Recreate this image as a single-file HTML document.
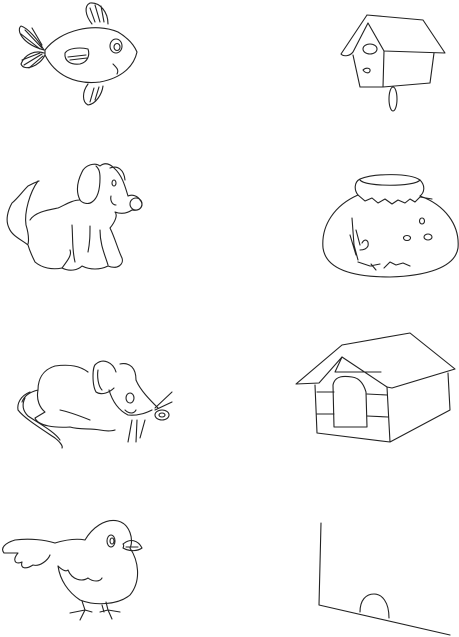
<!DOCTYPE html>
<html><head><meta charset="utf-8"><style>
html,body{margin:0;padding:0;background:#fff;width:459px;height:637px;overflow:hidden}
svg{display:block}
</style></head><body>
<svg width="459" height="637" viewBox="0 0 459 637" fill="none" stroke="#222" stroke-width="1.1" stroke-linecap="round" stroke-linejoin="round">
<!-- Fish -->
<path d="M45 50 C60 30 95 22 118 32 C128 38 134 45 137 52 C134 66 122 78 100 82 C75 85 55 75 45 55 Z"/>
<path d="M44 50 C38 40 28 28 21 26 C16 30 22 44 44 50 M44 53 C35 50 25 54 21 64 C24 72 40 66 45 55"/>
<path d="M25 30 L42 48 M21 34 L40 49 M32 28 L42 45 M24 65 L42 54 M22 60 L40 53 M29 68 L43 56"/>
<path d="M92 24 C85 15 84 6 90 3 C100 2 108 12 108 24 M95 22 L90 8 M100 22 L95 5 M104 22 L101 6"/>
<path d="M88 84 C82 92 82 102 88 105 C96 104 102 94 103 86 M90 102 L94 88 M95 100 L99 87"/>
<path d="M65 53 C68 48 80 47 88 49 C90 55 88 62 80 64 C72 65 64 62 65 53 M68 57 L86 55 M70 60 L87 58"/>
<ellipse cx="116" cy="46" rx="6" ry="7"/><ellipse cx="117" cy="47" rx="3" ry="3.5"/>
<path d="M113 64 C117 68 119 70 117 74"/>
<!-- Dog -->
<path d="M39 181 L34 183 L28 186 C22 192 18 198 12 203 C8 210 5 220 9 228 C12 236 22 240 28 245 C30 252 33 258 35 262 C42 268 52 270 62 268 C70 272 78 270 82 266 C90 270 100 270 108 266 C118 270 124 264 122 258 C118 250 115 238 110 228 C115 222 118 215 115 212 C120 214 126 214 132 210 C140 212 145 205 140 200 C138 196 132 194 128 196 C125 186 122 175 114 168 C110 164 105 162 100 166 C95 162 85 165 82 172 C78 180 75 190 80 200 C72 200 65 205 58 208 C48 210 35 212 30 220"/>
<path d="M38 181 C30 192 24 212 26 225 C30 238 28 244 28 244"/>
<path d="M80 200 C82 203 88 205 92 202 C98 198 100 188 100 178 C100 170 98 168 96 166"/>
<path d="M110 168 C118 165 124 170 125 180 M111 196 C110 200 112 205 116 205"/>
<ellipse cx="114" cy="183" rx="2" ry="3"/>
<circle cx="136" cy="204" r="6"/>
<path d="M72 225 C73 240 72 250 75 262 M90 226 C90 235 90 242 88 252 M62 268 C68 260 72 255 70 250 M100 230 C100 245 105 255 108 265"/>
<!-- Birdhouse -->
<path d="M367 15 L341 54 C344 57 350 56 353 52 L368 23 L384 51 L445 53 L423 20 L367 15"/>
<path d="M353 55 L360 87 L383 87 L384 51 M383 87 L430 83 L434 53"/>
<ellipse cx="370" cy="49" rx="7" ry="5"/>
<path d="M363 70 C366 67 371 68 370 71 C369 74 365 73 363 70"/>
<ellipse cx="393" cy="99" rx="4" ry="12"/>
<!-- Fishbowl -->
<path d="M358 195 C354 190 354 182 360 179 C375 173 410 173 420 180 C426 186 424 193 420 196 C445 205 460 225 458 248 C455 268 425 276 390 277 C355 277 326 270 323 248 C321 225 335 205 358 195 Z"/>
<path d="M360 180 C365 187 415 187 420 180"/>
<path d="M358 195 L365 201 L372 198 L378 203 L385 199 L392 204 L398 200 L405 203 L410 199 L415 202 L420 197 L432 199"/>
<ellipse cx="422" cy="221" rx="2.5" ry="3"/><ellipse cx="407" cy="238" rx="3.5" ry="2.5"/><ellipse cx="428" cy="237" rx="4" ry="3"/>
<path d="M352 218 L354 245 L358 260 M350 235 L356 255 M356 230 L360 245 M362 243 C365 238 369 240 368 246 C366 250 362 250 360 250 M358 262 L370 266 L380 264 M384 268 L390 262 L396 265 L403 263 L410 266 M371 264 L376 270"/>
<!-- Mouse -->
<path d="M88 372 C80 366 70 364 55 366 C42 370 38 380 38 390 C36 400 40 408 45 412 L35 418 C38 426 55 428 70 427 C80 430 90 428 100 430 C110 432 115 430 115 430 M38 390 C30 392 24 396 22 402"/>
<path d="M30 392 C20 396 17 404 18 410 C24 418 40 428 55 438 C60 442 63 446 62 448 M25 398 C22 404 22 410 28 416 C40 424 55 432 60 440"/>
<path d="M96 364 C92 366 92 385 96 392 C102 396 110 392 114 388 M96 364 C103 358 113 362 116 372 M98 370 C97 376 98 386 102 390"/>
<path d="M120 364 C130 362 136 368 136 380 C140 390 150 400 158 408 M109 390 C112 400 118 410 128 415 C140 416 148 412 152 410"/>
<ellipse cx="130" cy="398" rx="4" ry="5"/>
<path d="M125 410 C129 414 134 414 136 410"/>
<ellipse cx="162" cy="415" rx="7" ry="5"/><ellipse cx="162" cy="415" rx="3" ry="2"/>
<path d="M155 408 L172 392 M155 410 L172 402 M132 420 L128 442 M137 420 L136 442 M145 420 L140 438"/>
<path d="M60 410 C70 412 80 416 90 420"/>
<!-- Doghouse -->
<path d="M342 345 L296 384 L319 383 L342 357 L387 387 L392 388 L455 369 L410 333 L342 345"/>
<path d="M315 385 L317 433 L390 442 L450 410 L448 373 M387 387 L390 442"/>
<path d="M342 357 L335 372 L381 372"/>
<path d="M334 427 L333 385 C335 375 345 376 352 377 C360 378 364 385 366 392 L367 427 Z"/>
<path d="M317 392 L334 392 M317 414 L334 414 M367 394 L387 395 M367 416 L388 417"/>
<!-- Bird -->
<path d="M55 543 C65 540 75 538 85 540 C92 528 105 518 118 521 C130 524 134 540 130 548 C138 560 142 580 130 595 C118 605 95 606 80 600 C68 592 60 580 58 566"/>
<path d="M55 543 C45 540 30 538 15 540 C5 543 0 548 4 553 L18 553 C12 560 15 565 22 562 C20 568 25 570 33 565 C40 567 48 560 50 555"/>
<path d="M58 566 C62 570 66 572 68 570 C72 580 82 582 88 578 C93 582 100 582 102 578"/>
<ellipse cx="111" cy="541" rx="4" ry="6"/><ellipse cx="112" cy="541" rx="2" ry="3"/>
<path d="M123 544 C130 538 138 540 142 548 C138 551 130 552 123 548 C124 546 124 545 123 544 M126 547 L138 547"/>
<path d="M82 601 L85 610 L70 613 M85 610 L80 620 M85 610 L92 612 M106 602 L108 610 L100 612 M108 610 L120 612 M108 610 L112 619 M102 605 L104 612"/>
<!-- Mouse hole -->
<path d="M321 523 L319 605 L450 635"/>
<path d="M360 612 C360 600 366 594 374 594 C382 594 389 602 389 618"/>
</svg>
</body></html>
